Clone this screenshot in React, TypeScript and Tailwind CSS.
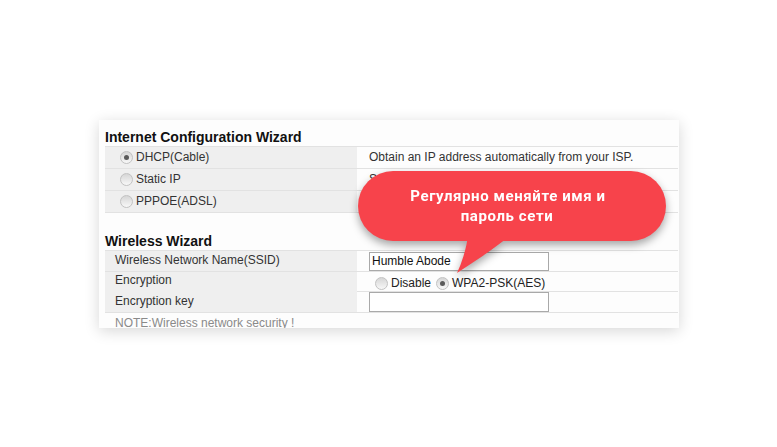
import React from "react";

function Radio({ checked = false }: { checked?: boolean }) {
  return (
    <span className="inline-flex w-[13px] h-[13px] rounded-full border border-[#c2c2c2] bg-gradient-to-b from-[#d6d6d6] to-[#f8f8f8] items-center justify-center shrink-0">
      {checked && <span className="w-[5px] h-[5px] rounded-full bg-[#5a5a5a]" />}
    </span>
  );
}

export default function App() {
  const font = { fontFamily: '"Liberation Sans", Arial, sans-serif' };
  return (
    <div className="relative w-[777px] h-[447px] bg-white overflow-hidden" style={font}>
      <div className="pt-[120px] pl-[99px]">
        <div className="w-[580px] h-[208px] bg-[#fdfdfd] shadow-[0_3px_14px_rgba(0,0,0,0.16)] overflow-hidden pl-[6px] pr-[1px] pt-[8px] text-[#333] text-[12px]">
          <div className="h-[18px] leading-[18px] text-[14px] font-bold text-[#111]">Internet Configuration Wizard</div>
          <div className="border-t border-[#e2e2e2]">
            {[
              { label: "DHCP(Cable)", checked: true, desc: "Obtain an IP address automatically from your ISP." },
              { label: "Static IP", checked: false, desc: "Set static IP provided by ISP." },
              { label: "PPPOE(ADSL)", checked: false, desc: "" },
            ].map((r) => (
              <div key={r.label} className="grid grid-cols-[252px_1fr] h-[22px] border-b border-[#e2e2e2]">
                <div className="bg-[#efefef] flex items-center pl-[15px] gap-[3px]">
                  <Radio checked={r.checked} />
                  <span className="leading-[21px]">{r.label}</span>
                </div>
                <div className="flex items-center pl-[12px] leading-[21px] whitespace-nowrap overflow-hidden">{r.desc}</div>
              </div>
            ))}
          </div>
          <div className="mt-[19px] h-[18px] leading-[18px] text-[14px] font-bold text-[#111]">Wireless Wizard</div>
          <div className="border-t border-[#e2e2e2]">
            <div className="grid grid-cols-[252px_1fr] h-[21px] border-b border-[#e2e2e2]">
              <div className="bg-[#efefef] pl-[10px] leading-[19px]">Wireless Network Name(SSID)</div>
              <div className="pl-[12px] pt-[1px]">
                <div className="w-[180px] h-[19px] border border-[#a9a9a9] bg-white pl-[2px] leading-[17px] text-[#111]">Humble Abode</div>
              </div>
            </div>
            <div className="grid grid-cols-[252px_1fr] h-[20px] border-b border-[#e2e2e2]">
              <div className="bg-[#efefef] pl-[10px] leading-[17px]">Encryption</div>
              <div className="pl-[18px] flex items-center pt-[2px] text-[#222]">
                <Radio />
                <span className="ml-[3px]">Disable</span>
                <span className="ml-[5px] flex"><Radio checked /></span>
                <span className="ml-[3px]">WPA2-PSK(AES)</span>
              </div>
            </div>
            <div className="grid grid-cols-[252px_1fr] h-[21px] border-b border-[#e2e2e2]">
              <div className="bg-[#efefef] pl-[10px] leading-[19px]">Encryption key</div>
              <div className="pl-[12px]">
                <div className="w-[180px] h-[20px] border border-[#a9a9a9] bg-white" />
              </div>
            </div>
            <div className="pl-[10px] leading-[20px] text-[#8a8a8a]">NOTE:Wireless network security !</div>
          </div>
        </div>
      </div>

      <div className="absolute left-0 top-0 w-[777px] h-[447px] pointer-events-none drop-shadow-[0_4px_4px_rgba(0,0,0,0.35)]">
        <svg className="absolute left-0 top-0" width="777" height="447">
          <path d="M 468 236 Q 465 256 457 273 Q 484 256 510 236 Z" fill="#f7434b" />
        </svg>
        <div className="absolute left-[358px] top-[171px] w-[308px] h-[70px] rounded-full bg-[#f7434b] flex flex-col items-center justify-center text-white font-bold text-[15px] leading-[20px] tracking-[0.6px]" style={{ fontFamily: 'Roboto, "Open Sans", sans-serif' }}>
          <div className="pl-[2px] pr-[10px]">Регулярно меняйте имя и</div>
          <div className="pr-[10px]">пароль сети</div>
        </div>
      </div>
    </div>
  );
}
